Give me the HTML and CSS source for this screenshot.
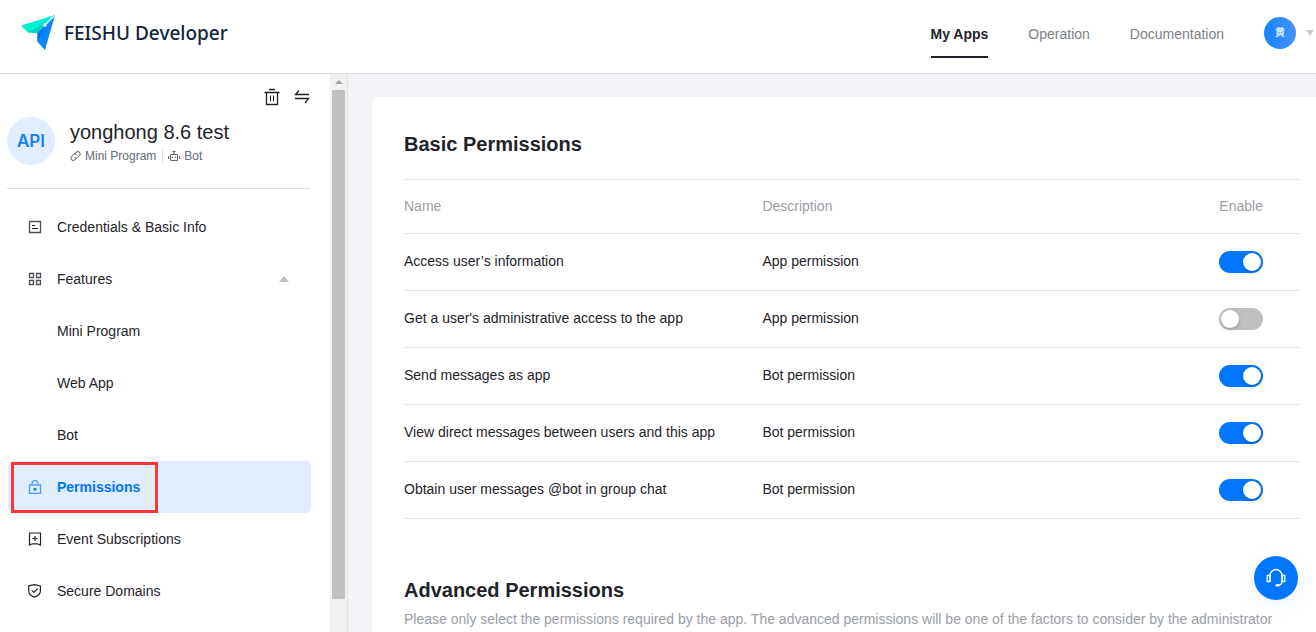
FILE: index.html
```html
<!DOCTYPE html>
<html lang="en">
<head>
<meta charset="utf-8">
<meta name="viewport" content="width=device-width, initial-scale=1">
<title>FEISHU Developer</title>
<link rel="stylesheet" href="styles.css">
</head>
<body>
<header class="topbar">
  <a class="brand" href="#">
    <svg class="brand-mark" viewBox="0 0 36 36" width="36" height="36" aria-hidden="true">
      <path d="M1 10.500L35 0 17 17.500H8z" fill="#00f0d4"/>
      <path d="M8 17.500L26 8 17 18z" fill="#00d4b8"/>
      <path d="M35 0L25 35 17.500 27V17.500z" fill="#0a84ff"/>
      <path d="M17.500 27V17.500L24 12z" fill="#0070f5"/>
      <path d="M34 1L25 10" stroke="#fff" stroke-width="1.200"/>
      <circle cx="25" cy="10" r="1.800" fill="#fff"/>
    </svg>
    <span>FEISHU Developer</span>
  </a>
  <nav class="topnav">
    <a class="topnav-link is-active" href="#">My Apps</a>
    <a class="topnav-link" href="#">Operation</a>
    <a class="topnav-link" href="#">Documentation</a>
  </nav>
  <button class="account" type="button" aria-label="Account menu">
    <span class="avatar">黄</span>
    <span class="caret-down"></span>
  </button>
</header>

<div class="layout">
  <aside class="sidebar">
    <div class="sidebar-body">
      <div class="app-actions">
        <button class="icon-button" type="button" aria-label="Delete app">
          <svg viewBox="0 0 16 18" width="16" height="18" fill="none" stroke="#1f2329">
            <path d="M5 1.500h6M.500 4.500h15M2.500 4.500v12h11v-12" stroke-width="1.300"/>
            <path d="M6.500 7.500v6M9.500 7.500v6"/>
          </svg>
        </button>
        <button class="icon-button" type="button" aria-label="Switch app">
          <svg viewBox="0 0 16 18" width="16" height="18" fill="none" stroke="#1f2329" stroke-width="1.300">
            <path d="M15 6.500H1.500L5 2.500M1 10.500h13.500l-3.500 4.500"/>
          </svg>
        </button>
      </div>
      <div class="app">
        <span class="app-logo">API</span>
        <div>
          <h1 class="app-name">yonghong 8.6 test</h1>
          <div class="app-tags">
            <span class="tag">
              <svg viewBox="0 0 12 12" width="11" height="12" fill="none" stroke="#646a73" stroke-width="1.100">
                <path d="M5 3.500L7 1.700a2.500 2.500 0 0 1 3.500 3.500L8.300 7.600a2.300 2.300 0 0 1-3.200.200M7 8.500l-2 1.800A2.500 2.500 0 0 1 1.500 6.800l2.200-2.400a2.300 2.300 0 0 1 3.200-.200"/>
              </svg>
              Mini Program
            </span>
            <span class="tag tag-next">
              <svg viewBox="0 0 12 12" width="12" height="12" fill="none" stroke="#646a73">
                <path d="M2.500 4.500h7v6h-7zM6 4.500v-3M4.500 1.500h3M.500 6v3M11.500 6v3M4.500 6.500v1.500M7.500 6.500v1.500"/>
              </svg>
              Bot
            </span>
          </div>
        </div>
      </div>
      <nav class="menu">
        <a class="menu-item" href="#">
          <svg class="menu-icon" viewBox="0 0 14 14" width="14" height="14" fill="none" stroke="#4b5058">
            <path d="M1.500 1.500h11v11h-11z" stroke-width="1.300"/>
            <path d="M4 5.500h3M4 8.500h6" stroke="#1f2329"/>
          </svg>
          Credentials &amp; Basic Info
        </a>
        <a class="menu-item" href="#">
          <svg class="menu-icon" viewBox="0 0 14 14" width="14" height="14" fill="none" stroke="#4b5058" stroke-width="1.300">
            <path d="M1.500 1.500h4v4h-4zM8.500 1.500h4v4h-4zM1.500 8.500h4v4h-4zM8.500 8.500h4v4h-4z"/>
          </svg>
          Features
          <span class="caret-up"></span>
        </a>
        <a class="menu-item menu-child" href="#">Mini Program</a>
        <a class="menu-item menu-child" href="#">Web App</a>
        <a class="menu-item menu-child" href="#">Bot</a>
        <a class="menu-item is-current" href="#" aria-current="page">
          <svg class="menu-icon" viewBox="0 0 14 14" width="14" height="14" fill="none" stroke="#4b9fff" stroke-width="1.300">
            <path d="M1.500 5h11v8.300h-11zM4 5V3.500a3 3 0 0 1 6 0V5"/>
            <circle cx="7" cy="9.300" r="1.500" fill="#0075ff" stroke="none"/>
          </svg>
          Permissions
          <span class="callout"></span>
        </a>
        <a class="menu-item" href="#">
          <svg class="menu-icon" viewBox="0 0 14 14" width="14" height="14" fill="none" stroke="#1f2329" stroke-width="1.200">
            <path d="M1.500 1h11v12L9.500 11.800h-5L1.500 13z"/>
            <path d="M7 4v5M4.500 6.500h5"/>
          </svg>
          Event Subscriptions
        </a>
        <a class="menu-item" href="#">
          <svg class="menu-icon" viewBox="0 0 14 14" width="14" height="14" fill="none" stroke="#1f2329" stroke-width="1.200">
            <path d="M.700 1.900L6.500.600l5.900 1.300v5c0 3-2.600 5-5.900 6.200C3.300 11.900.700 9.900.700 6.900z"/>
            <path d="M3.800 6.300L6 8.500l3.700-3.800"/>
          </svg>
          Secure Domains
        </a>
      </nav>
    </div>
    <div class="scroll-track" aria-hidden="true">
      <span class="scroll-arrow"></span>
      <span class="scroll-thumb"></span>
    </div>
  </aside>

  <main class="content">
    <section class="card">
      <h2 class="card-title">Basic Permissions</h2>
      <table class="permissions">
        <thead>
          <tr><th class="col-name">Name</th><th class="col-desc">Description</th><th>Enable</th></tr>
        </thead>
        <tbody>
          <tr><td><label for="p1">Access user’s information</label></td><td>App permission</td><td><input class="switch" id="p1" type="checkbox" role="switch" checked></td></tr>
          <tr><td><label for="p2">Get a user's administrative access to the app</label></td><td>App permission</td><td><input class="switch" id="p2" type="checkbox" role="switch"></td></tr>
          <tr><td><label for="p3">Send messages as app</label></td><td>Bot permission</td><td><input class="switch" id="p3" type="checkbox" role="switch" checked></td></tr>
          <tr><td><label for="p4">View direct messages between users and this app</label></td><td>Bot permission</td><td><input class="switch" id="p4" type="checkbox" role="switch" checked></td></tr>
          <tr><td><label for="p5">Obtain user messages @bot in group chat</label></td><td>Bot permission</td><td><input class="switch" id="p5" type="checkbox" role="switch" checked></td></tr>
        </tbody>
      </table>
      <h2 class="card-title card-title-next">Advanced Permissions</h2>
      <p class="card-note">Please only select the permissions required by the app. The advanced permissions will be one of the factors to consider by the administrator</p>
    </section>
  </main>
</div>

<button class="support" type="button" aria-label="Customer support">
  <svg viewBox="0 0 20 20" width="20" height="20" fill="none" stroke="#fff" stroke-width="1.300">
    <path d="M4 13.500V7.500a6 6 0 0 1 12 0v6c0 2.500-2 3.800-4.500 3.900"/>
    <path d="M4 7.500H1.200v6H4zM16 7.500h2.800v6H16z"/>
    <ellipse cx="11.500" cy="17.300" rx="2" ry="1.400" fill="#fff" stroke="none"/>
  </svg>
</button>
</body>
</html>
```

FILE: styles.css
```css
* { box-sizing: border-box; }

body {
  margin: 0;
  height: 100vh;
  overflow: hidden;
  display: flex;
  flex-direction: column;
  font-family: "Liberation Sans", Arial, "Noto Sans CJK SC", sans-serif;
  font-size: 14px;
  line-height: 20px;
  color: #1f2329;
  background: #f3f4f9;
}

a { color: inherit; text-decoration: none; }
h1, h2, p { margin: 0; }
button { border: 0; padding: 0; background: none; font: inherit; cursor: pointer; }
svg { display: block; flex: none; }

.topbar {
  flex: none;
  display: flex;
  align-items: center;
  height: 74px;
  padding: 0 2px 8px 20px;
  background: #fff;
  border-bottom: 1px solid #dee0e3;
}

.brand {
  display: flex;
  align-items: center;
  gap: 8px;
  margin-right: auto;
  font-family: "Noto Sans", sans-serif;
  font-size: 19px;
  font-weight: 500;
  color: #10243e;
}

.topnav { display: flex; gap: 40px; margin-right: 40px; }
.topnav-link { padding: 16px 0 12px; border-bottom: 2px solid transparent; color: #7d8085; }
.topnav-link.is-active { font-weight: bold; color: #1f2329; border-color: #1f2329; }

.account { display: flex; align-items: center; gap: 10px; }
.avatar {
  width: 32px;
  border-radius: 50%;
  font-size: 10px;
  line-height: 32px;
  font-weight: bold;
  color: #dcebff;
  background: linear-gradient(90deg, #1684ff, #4592ff);
}
.caret-down, .caret-up, .scroll-arrow { border: 4px solid transparent; }
.caret-down { border-width: 6px 4px 0; border-top-color: #c5c8ce; }

.layout { flex: 1; min-height: 0; display: flex; }

.sidebar {
  flex: none;
  display: flex;
  width: 348px;
  background: #fff;
  border-right: 1px solid #dfe1e6;
}
.sidebar-body { flex: 1; overflow: hidden; padding: 14px 19px 0 7px; }

.app-actions { display: flex; justify-content: flex-end; gap: 14px; padding-right: 1px; }
.icon-button { height: 18px; }

.app {
  display: flex;
  align-items: flex-start;
  gap: 15px;
  margin: 11px 1px 0 0;
  padding-bottom: 23px;
  border-bottom: 1px solid #dee0e3;
}
.app-logo {
  width: 48px;
  border-radius: 50%;
  text-align: center;
  font: 600 17px/48px Inter, sans-serif;
  color: #0f80ff;
  background: #e1eeff;
}
.app-name { font-size: 20px; line-height: 30px; font-weight: normal; }
.app-tags { display: flex; padding-top: 2px; font-size: 12px; line-height: 14px; color: #646a73; }
.tag { display: flex; align-items: center; gap: 4px; }
.tag-next { margin-left: 6px; padding-left: 5px; border-left: 1px solid #dee0e3; }

.menu { padding-top: 12px; }
.menu-item {
  position: relative;
  display: flex;
  align-items: center;
  gap: 15px;
  height: 52px;
  margin-left: 1px;
  padding: 0 22px 0 20px;
  border-radius: 5px;
}
.menu-child { padding-left: 49px; }
.menu-item.is-current { background: #e1eeff; color: #0075ff; font-weight: bold; }
.caret-up { margin-left: auto; border-width: 0 5px 6px; border-bottom-color: #bbbfc4; }
.callout {
  position: absolute;
  top: 1px;
  bottom: 0;
  left: 3px;
  width: 147px;
  border: 3px solid #fc3538;
}

.scroll-track {
  display: flex;
  flex-direction: column;
  align-items: center;
  width: 17px;
  padding: 6px 0 33px;
  background: #f1f1f1;
}
.scroll-arrow { border-width: 0 4px 4px; border-bottom-color: #a3a3a3; }
.scroll-thumb { flex: 1; width: 13px; margin-top: 6px; background: #c1c1c1; }

.content { flex: 1; min-width: 0; padding: 23px 0 0 24px; }
.card {
  min-height: 100%;
  padding: 32px 16px 0 32px;
  background: #fff;
  border-top-left-radius: 6px;
}
.card-title { font-size: 20px; line-height: 30px; }
.card-title-next { margin-top: 56px; }
.card-note { margin-top: 4px; color: #9a9ea5; }

.permissions {
  width: 100%;
  margin-top: 20px;
  table-layout: fixed;
  border-collapse: collapse;
  border-top: 1px solid #e2e3e6;
}
.permissions th, .permissions td {
  height: 57px;
  padding: 0 0 2px;
  border-bottom: 1px solid #e2e3e6;
  text-align: left;
}
.permissions th { height: 54px; font-weight: normal; color: #9a9ea5; }
.col-name { width: 40%; }
.col-desc { width: 51%; }

.switch {
  appearance: none;
  display: flex;
  align-items: center;
  width: 44px;
  height: 22px;
  margin: 2px 0 0;
  padding: 0 2px;
  border-radius: 11px;
  background: #bfbfbf;
  cursor: pointer;
}
.switch::before {
  content: "";
  width: 18px;
  height: 18px;
  border-radius: 50%;
  background: #fff;
  box-shadow: 0 2px 4px rgba(0, 35, 11, 0.2);
}
.switch:checked { justify-content: flex-end; background: #0075ff; }

.support {
  position: fixed;
  right: 18px;
  bottom: 32px;
  display: grid;
  place-items: center;
  width: 44px;
  height: 44px;
  border-radius: 50%;
  background: #0075ff;
  box-shadow: 0 4px 20px rgba(0, 117, 255, 0.08);
}
```
